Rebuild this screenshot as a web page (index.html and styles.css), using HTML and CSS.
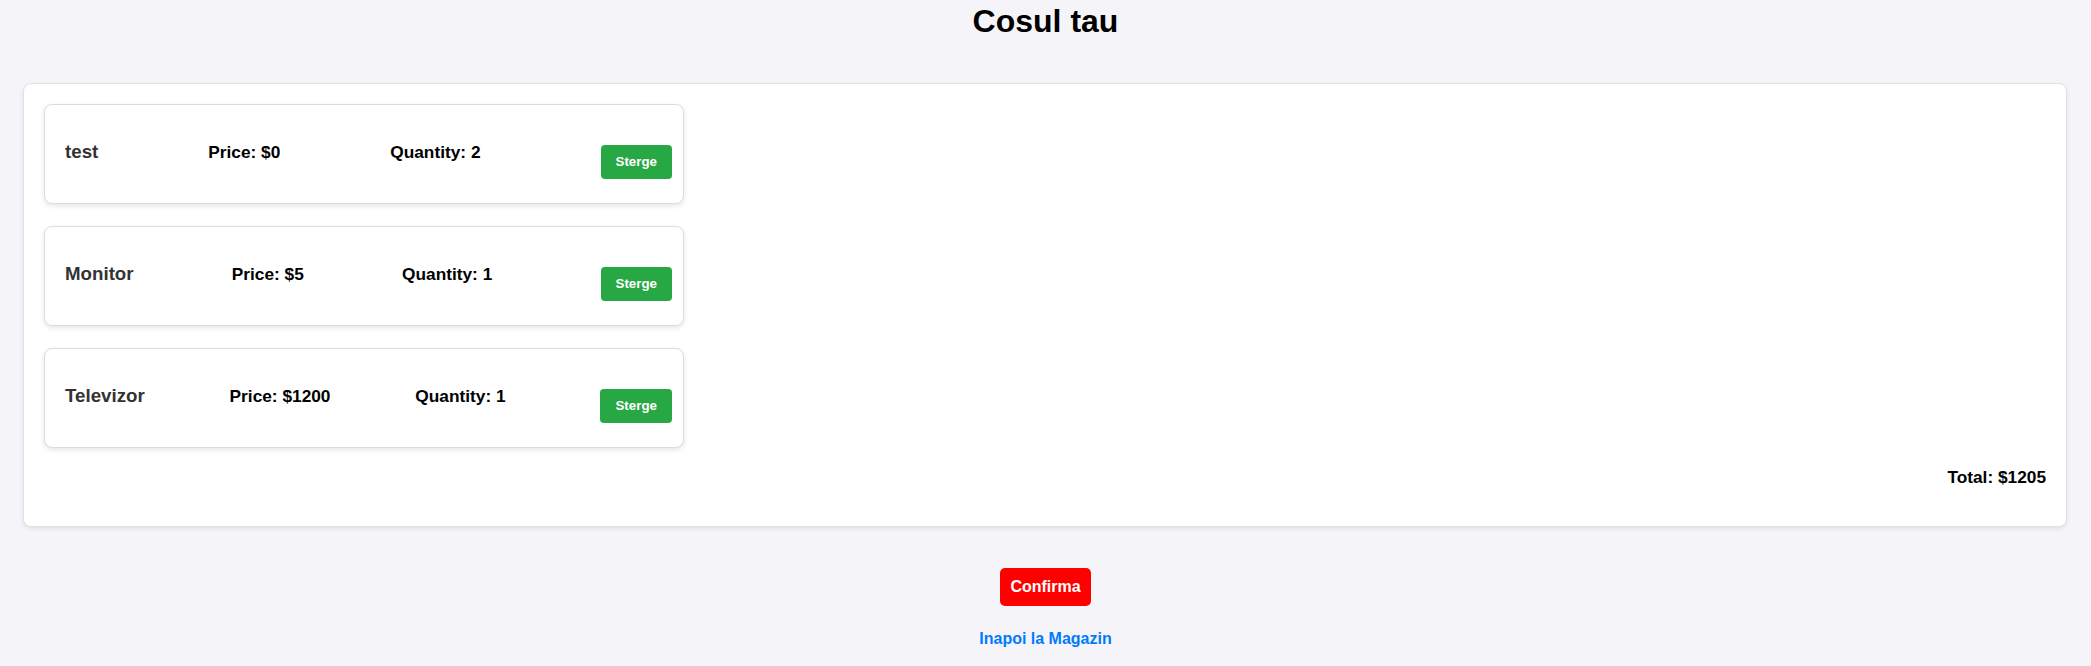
FILE: index.html
```html
<!DOCTYPE html>
<html lang="ro">
<head>
<meta charset="utf-8">
<title>Cosul tau</title>
<link rel="stylesheet" href="styles.css">
</head>
<body>
<h1 class="page-title">Cosul tau</h1>
<div class="cart">
  <div class="cart-item">
    <h3 class="item-name">test</h3>
    <p class="item-info">Price: $0</p>
    <p class="item-info">Quantity: 2</p>
    <button class="btn-remove">Sterge</button>
  </div>
  <div class="cart-item">
    <h3 class="item-name">Monitor</h3>
    <p class="item-info">Price: $5</p>
    <p class="item-info">Quantity: 1</p>
    <button class="btn-remove">Sterge</button>
  </div>
  <div class="cart-item">
    <h3 class="item-name">Televizor</h3>
    <p class="item-info">Price: $1200</p>
    <p class="item-info">Quantity: 1</p>
    <button class="btn-remove">Sterge</button>
  </div>
  <p class="total">Total: $1205</p>
</div>
<div class="actions">
  <button class="btn-confirm">Confirma</button>
  <a class="back-link" href="#">Inapoi la Magazin</a>
</div>
</body>
</html>
```

FILE: styles.css
```css
html, body {
  margin: 0;
  padding: 0;
}
body {
  background: #f4f4f9;
  font-family: "Liberation Sans", Arial, sans-serif;
  color: #000;
}
.page-title {
  margin: 3px 0 43px;
  font-size: 32px;
  font-weight: bold;
  text-align: center;
  line-height: normal;
}
.cart {
  margin: 0 24px 0 23px;
  padding: 20px 20px 0;
  background: #fff;
  border: 1px solid #e2e2e6;
  border-radius: 8px;
  box-shadow: 0 2px 4px rgba(0, 0, 0, 0.08);
  display: flow-root;
}
.cart-item {
  width: 640px;
  min-height: 100px;
  box-sizing: border-box;
  padding: 0 11px 0 20px;
  margin-bottom: 22px;
  display: flex;
  align-items: center;
  justify-content: space-between;
  background: #fff;
  border: 1px solid #dcdcdc;
  border-radius: 8px;
  box-shadow: 0 2px 5px rgba(0, 0, 0, 0.1);
}
.cart-item:last-of-type {
  margin-bottom: 19px;
}
.item-name {
  margin: 0 0 4px;
  font-size: 18.72px;
  font-weight: bold;
  color: #333;
}
.item-info {
  margin: 0 0 4px;
  font-size: 17.3px;
  font-weight: bold;
  color: #000;
}
.btn-remove {
  margin: 15px 0 0 10px;
  padding: 9px 15px;
  font-family: "Liberation Sans", Arial, sans-serif;
  font-size: 13.33px;
  line-height: 16px;
  font-weight: bold;
  color: #fff;
  background: #28a745;
  border: none;
  border-radius: 4px;
}
.total {
  margin: 0 0 38px;
  font-size: 17.3px;
  font-weight: bold;
  text-align: right;
}
.actions {
  margin-top: 41px;
  display: flex;
  flex-direction: column;
  align-items: center;
}
.btn-confirm {
  padding: 10px;
  font-family: "Liberation Sans", Arial, sans-serif;
  font-size: 16px;
  line-height: 18px;
  font-weight: bold;
  color: #fff;
  background: #ff0000;
  border: none;
  border-radius: 5px;
}
.back-link {
  margin-top: 24px;
  font-size: 16px;
  font-weight: bold;
  color: #007bff;
  text-decoration: none;
}
```
